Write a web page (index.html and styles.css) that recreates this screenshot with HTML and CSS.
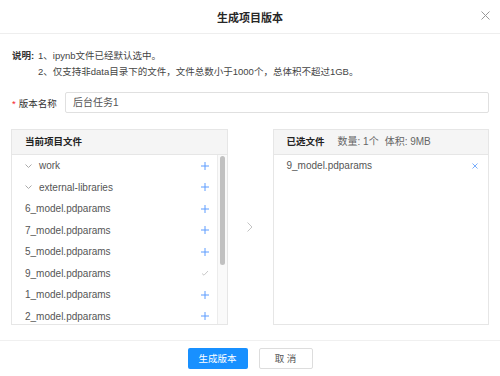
FILE: index.html
```html
<html>
<head>
  <link rel="stylesheet" href="styles.css">
</head>
<body>
<div class="modal">
  <div class="modal-header">
    <span class="modal-title">生成项目版本</span>
    <span class="modal-close">
      <svg width="9" height="9" viewBox="0 0 9 9"><path d="M0.5 0.5L8.5 8.5M8.5 0.5L0.5 8.5" stroke="#999" stroke-width="1" fill="none"/></svg>
    </span>
  </div>
  <div class="modal-body">
    <div class="notes">
      <span class="notes-label">说明:</span>
      <div class="notes-list">
        <div>1、ipynb文件已经默认选中。</div>
        <div>2、仅支持非data目录下的文件，文件总数小于1000个，总体积不超过1GB。</div>
      </div>
    </div>
    <div class="form-row">
      <label class="form-label"><span class="required">*</span>版本名称</label>
      <div class="form-input">后台任务1</div>
    </div>
    <div class="transfer">
      <div class="panel">
        <div class="panel-header">当前项目文件</div>
        <div class="panel-body">
          <div class="file-list">
            <div class="file-row"><span class="file-name"><span class="caret"><svg width="7" height="4" viewBox="0 0 7 4"><path d="M0.5 0.5L3.5 3.5L6.5 0.5" stroke="#aaa" fill="none"/></svg></span>work</span><span class="add"><svg width="8" height="8" viewBox="0 0 8 8"><path d="M4 0V8M0 4H8" stroke="#5d9cff" stroke-width="1"/></svg></span></div>
            <div class="file-row"><span class="file-name"><span class="caret"><svg width="7" height="4" viewBox="0 0 7 4"><path d="M0.5 0.5L3.5 3.5L6.5 0.5" stroke="#aaa" fill="none"/></svg></span>external-libraries</span><span class="add"><svg width="8" height="8" viewBox="0 0 8 8"><path d="M4 0V8M0 4H8" stroke="#5d9cff" stroke-width="1"/></svg></span></div>
            <div class="file-row"><span class="file-name">6_model.pdparams</span><span class="add"><svg width="8" height="8" viewBox="0 0 8 8"><path d="M4 0V8M0 4H8" stroke="#5d9cff" stroke-width="1"/></svg></span></div>
            <div class="file-row"><span class="file-name">7_model.pdparams</span><span class="add"><svg width="8" height="8" viewBox="0 0 8 8"><path d="M4 0V8M0 4H8" stroke="#5d9cff" stroke-width="1"/></svg></span></div>
            <div class="file-row"><span class="file-name">5_model.pdparams</span><span class="add"><svg width="8" height="8" viewBox="0 0 8 8"><path d="M4 0V8M0 4H8" stroke="#5d9cff" stroke-width="1"/></svg></span></div>
            <div class="file-row"><span class="file-name">9_model.pdparams</span><span class="add"><svg width="8" height="8" viewBox="0 0 8 8"><path d="M1 4.5L3 6.2L7 2" stroke="#bbb" stroke-width="0.8" fill="none"/></svg></span></div>
            <div class="file-row"><span class="file-name">1_model.pdparams</span><span class="add"><svg width="8" height="8" viewBox="0 0 8 8"><path d="M4 0V8M0 4H8" stroke="#5d9cff" stroke-width="1"/></svg></span></div>
            <div class="file-row"><span class="file-name">2_model.pdparams</span><span class="add"><svg width="8" height="8" viewBox="0 0 8 8"><path d="M4 0V8M0 4H8" stroke="#5d9cff" stroke-width="1"/></svg></span></div>
          </div>
          <div class="scroll-track"><div class="scroll-thumb"></div></div>
        </div>
      </div>
      <div class="transfer-arrow">
        <svg width="6" height="10" viewBox="0 0 6 10"><path d="M0.5 0.5L5 5L0.5 9.5" stroke="#c4c4c4" fill="none"/></svg>
      </div>
      <div class="panel">
        <div class="panel-header">已选文件<span class="stat first">数量: 1个</span><span class="stat">体积: 9MB</span></div>
        <div class="panel-body">
          <div class="file-list">
            <div class="file-row selected"><span class="file-name">9_model.pdparams</span><span class="remove"><svg width="6" height="6" viewBox="0 0 6 6"><path d="M0.5 0.5L5.5 5.5M5.5 0.5L0.5 5.5" stroke="#7aaefc" stroke-width="1"/></svg></span></div>
          </div>
        </div>
      </div>
    </div>
  </div>
  <div class="modal-footer">
    <a href="#" class="btn btn-primary">生成版本</a>
    <a href="#" class="btn btn-default">取 消</a>
  </div>
</div>
</body>
</html>
```

FILE: styles.css
```css
body {
  margin: 0;
  padding: 0;
  font-family: "Liberation Sans", "Noto Sans CJK SC", sans-serif;
  font-size: 10px;
  color: #333;
  background: #fff;
}

.modal {
  width: 500px;
  height: 376px;
  display: flex;
  flex-direction: column;
}

.modal-header {
  position: relative;
  height: 33px;
  border-bottom: 1px solid #eee;
  display: flex;
  align-items: center;
  justify-content: center;
}

.modal-title {
  font-size: 11px;
  font-weight: bold;
  color: #262626;
}

.modal-close {
  position: absolute;
  right: 10px;
  top: 11px;
  line-height: 0;
}

.modal-body {
  padding: 14px 11px 0 11px;
}

.notes {
  display: flex;
  padding-left: 1px;
  line-height: 16px;
  font-size: 9.5px;
  color: #444;
}

.notes-label {
  width: 26px;
  font-weight: bold;
  color: #333;
}

.form-row {
  display: flex;
  align-items: center;
  margin-top: 12px;
}

.form-label {
  width: 53px;
  font-size: 9.5px;
  color: #333;
  padding-left: 1px;
}

.required {
  color: #f5222d;
  margin-right: 3px;
}

.form-input {
  flex: 1;
  height: 19px;
  line-height: 19px;
  border: 1px solid #e0e0e0;
  border-radius: 2px;
  padding-left: 7px;
  color: #555;
}

.transfer {
  display: flex;
  margin-top: 16px;
  height: 196px;
}

.panel {
  flex: 1;
  border: 1px solid #e6e6e6;
  display: flex;
  flex-direction: column;
}

.panel-header {
  height: 24px;
  line-height: 24px;
  background: #f5f5f5;
  border-bottom: 1px solid #e6e6e6;
  padding-left: 13px;
  font-size: 9.5px;
  font-weight: bold;
  color: #222;
}

.stat {
  font-size: 10px;
  font-weight: normal;
  color: #666;
  margin-left: 6px;
}

.stat.first {
  margin-left: 13px;
}

.panel-body {
  flex: 1;
  display: flex;
  overflow: hidden;
}

.file-list {
  flex: 1;
}

.file-row {
  height: 21.5px;
  display: flex;
  align-items: center;
  justify-content: space-between;
  padding: 0 8px 0 13px;
  color: #555;
}

.file-row.selected {
  padding-right: 10px;
}

.file-name {
  display: flex;
  align-items: center;
}

.caret {
  line-height: 0;
  margin-right: 7px;
}

.add, .remove {
  line-height: 0;
}

.scroll-track {
  width: 9px;
  border-left: 1px solid #ececec;
  background: #fafafa;
  display: flex;
  justify-content: center;
}

.scroll-thumb {
  width: 5px;
  height: 109px;
  margin-top: 1px;
  border-radius: 3px;
  background: #c1c1c1;
}

.transfer-arrow {
  width: 45px;
  display: flex;
  align-items: center;
  justify-content: center;
}

.modal-footer {
  margin-top: 15px;
  border-top: 1px solid #f0f0f0;
  padding-top: 7px;
  display: flex;
  justify-content: center;
  gap: 11px;
}

.btn {
  display: block;
  height: 21px;
  line-height: 21px;
  font-size: 9.5px;
  text-align: center;
  text-decoration: none;
  border-radius: 2px;
  box-sizing: border-box;
}

.btn-primary {
  width: 60px;
  background: #1890ff;
  color: #fff;
}

.btn-default {
  width: 54px;
  border: 1px solid #ddd;
  line-height: 19px;
  color: #555;
}
```
